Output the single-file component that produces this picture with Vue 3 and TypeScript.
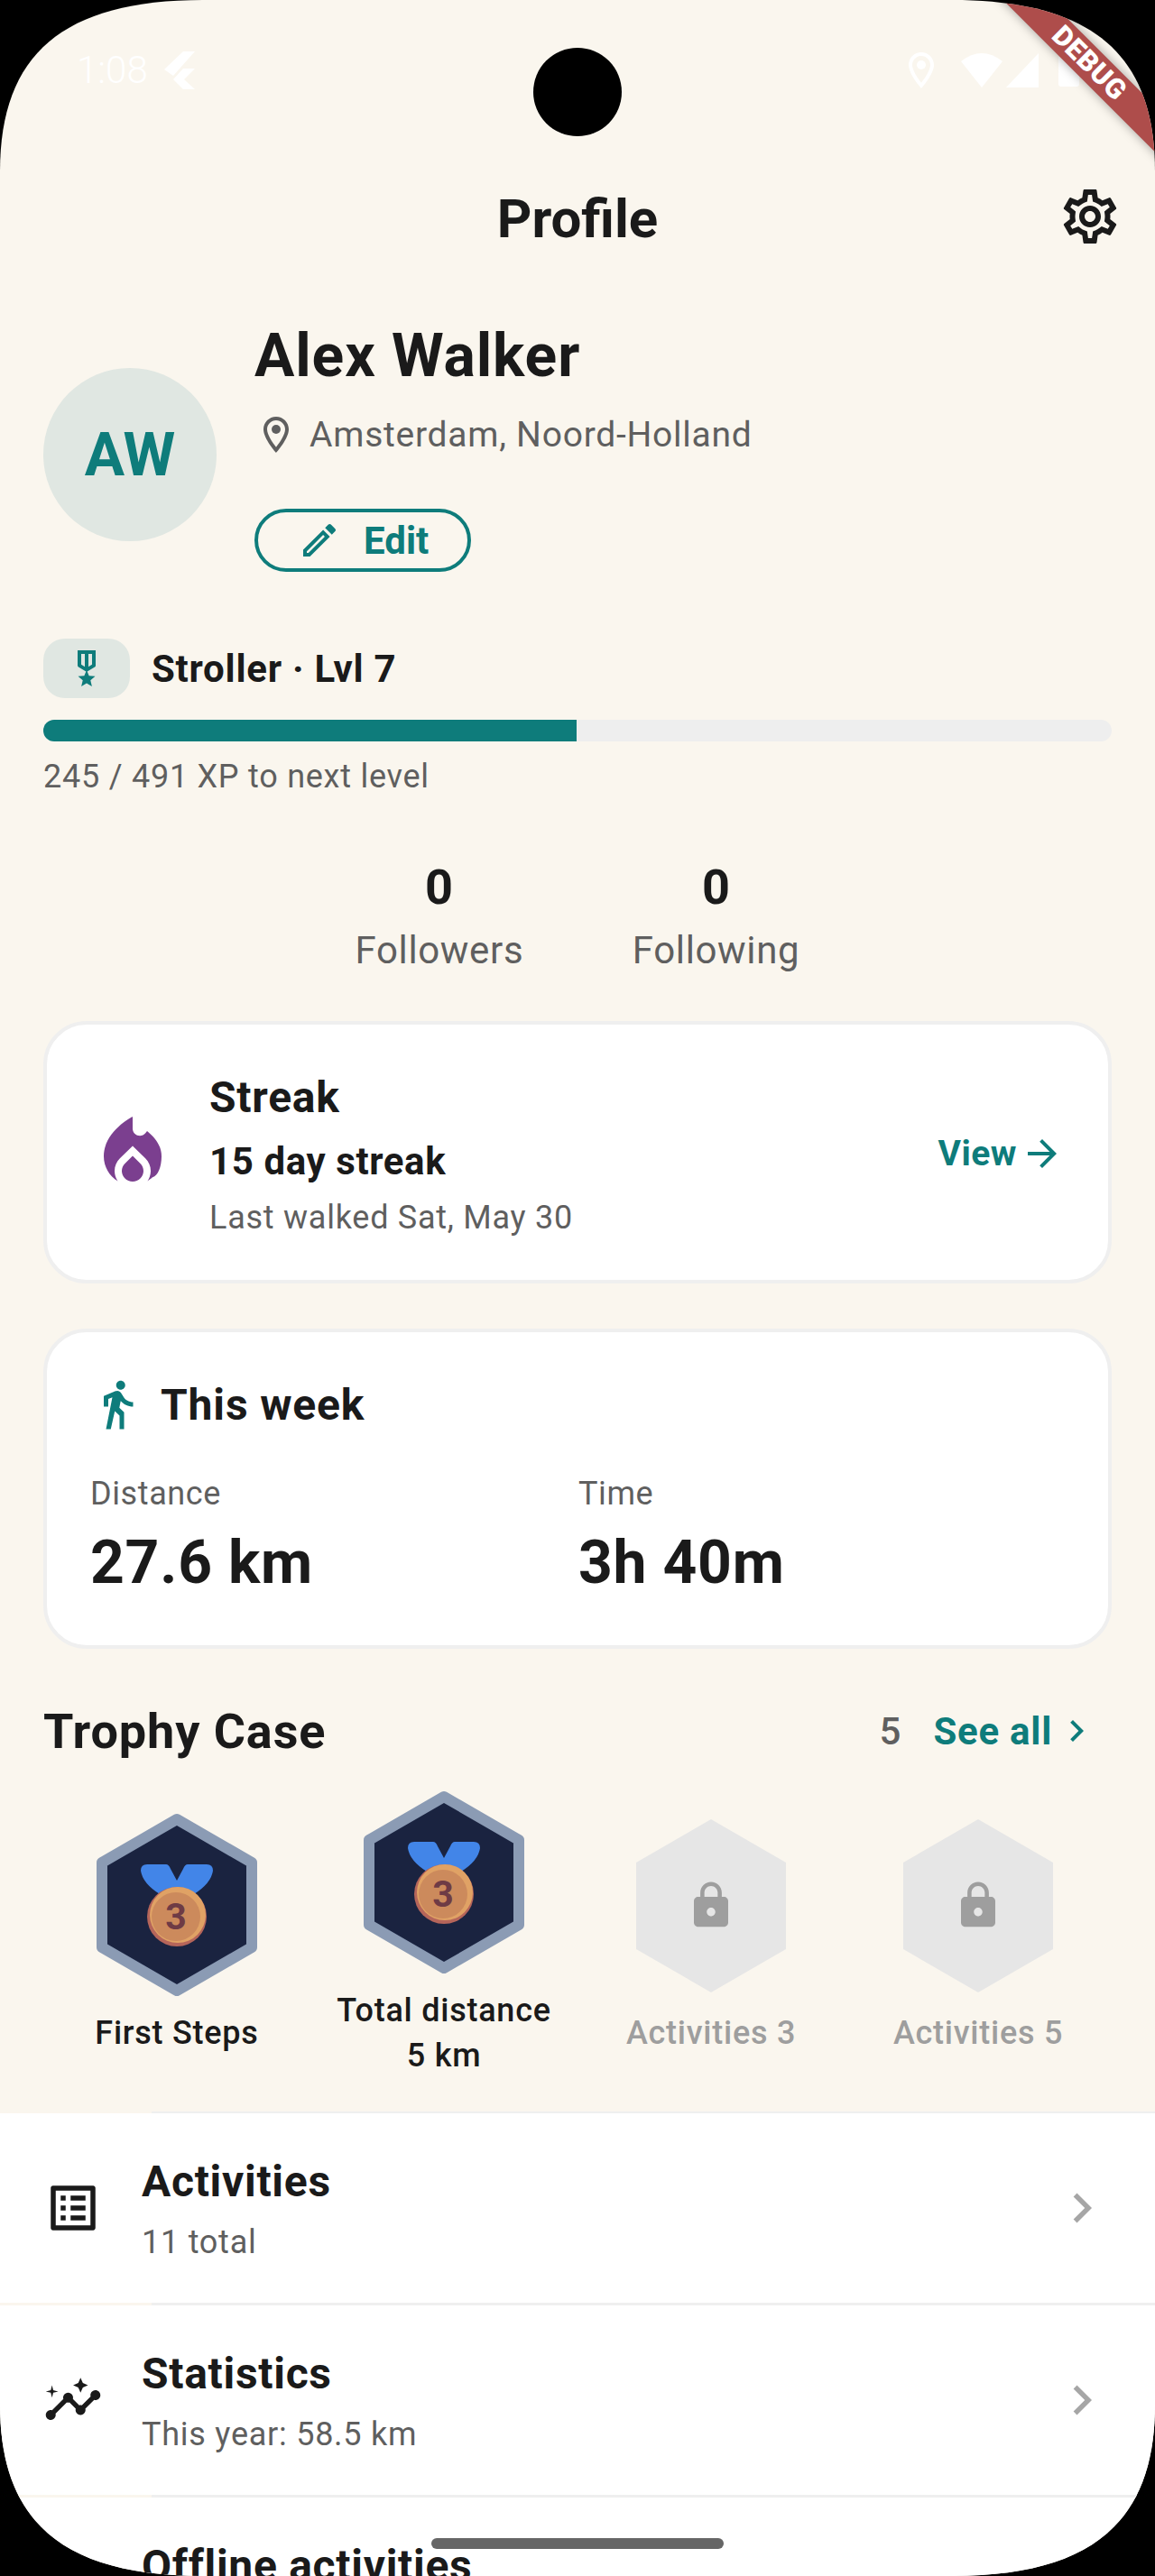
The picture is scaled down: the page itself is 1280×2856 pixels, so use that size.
<script setup lang="ts">
const stats = [
  { value: '0', label: 'Followers' },
  { value: '0', label: 'Following' },
]
const week = [
  { label: 'Distance', value: '27.6 km' },
  { label: 'Time', value: '3h 40m' },
]
const trophies = [
  { lines: ['First Steps'], earned: true },
  { lines: ['Total distance', '5 km'], earned: true },
  { lines: ['Activities 3'], earned: false },
  { lines: ['Activities 5'], earned: false },
]
const chevron = 'M10 6L8.59 7.41 13.17 12l-4.58 4.59L10 18l6-6z'
const rows = [
  {
    title: 'Activities',
    sub: '11 total',
    icon: 'M19 5v14H5V5h14m1.1-2H3.9c-.5 0-.9.4-.9.9v16.2c0 .4.4.9.9.9h16.2c.4 0 .9-.5.9-.9V3.9c0-.5-.5-.9-.9-.9zM11 7h6v2h-6V7zm0 4h6v2h-6v-2zm0 4h6v2h-6zM7 7h2v2H7zm0 4h2v2H7zm0 4h2v2H7z',
  },
  {
    title: 'Statistics',
    sub: 'This year: 58.5 km',
    icon: 'M21 8c-1.45 0-2.26 1.44-1.93 2.51l-3.55 3.56c-.3-.09-.74-.09-1.04 0l-2.55-2.55C12.27 10.45 11.46 9 10 9c-1.45 0-2.27 1.44-1.93 2.52l-4.56 4.55C2.44 15.74 1 16.55 1 18c0 1.1.9 2 2 2 1.45 0 2.26-1.44 1.93-2.51l4.55-4.56c.3.09.74.09 1.04 0l2.55 2.55C12.73 16.55 13.54 18 15 18c1.45 0 2.27-1.44 1.93-2.52l3.56-3.55c1.07.33 2.51-.48 2.51-1.93 0-1.1-.9-2-2-2zM15 9l.94-2.07L18 6l-2.06-.93L15 3l-.92 2.07L12 6l2.08.93zM3.5 11L4 9l2-.5L4 8l-.5-2L3 8l-2 .5L3 9z',
  },
  {
    title: 'Offline activities',
    sub: '',
    icon: '',
  },
]
</script>

<template>
  <div class="device">
    <div class="camera"></div>
    <div class="banner"><span>DEBUG</span></div>

    <div class="status">
      <div class="status-left">
        <span class="time">1:08</span>
        <svg class="flutter" width="34" height="42" viewBox="0 0 34 42">
          <polygon fill="#fff" points="21,0 34,0 10,27 0,20" />
          <polygon fill="#fff" points="21,19 34,19 22,31 34,42 21,42 10,31" />
        </svg>
      </div>
      <div class="status-right">
        <svg width="40" height="40" viewBox="5 2 14 20" class="s-pin">
          <path fill="#fff" d="M12 2C8.13 2 5 5.13 5 9c0 5.25 7 13 7 13s7-7.75 7-13c0-3.87-3.13-7-7-7zM7 9c0-2.76 2.24-5 5-5s5 2.24 5 5c0 2.88-2.88 7.19-5 9.88C9.92 16.21 7 11.85 7 9z" />
          <circle fill="#fff" cx="12" cy="9" r="2.5" />
        </svg>
        <svg class="s-wifi" width="46" height="38" viewBox="0 0 46 38">
          <path fill="#fff" d="M0 9 Q23 -9 46 9 L23 38 Z" />
        </svg>
        <svg class="s-cell" width="36" height="38" viewBox="0 0 36 38">
          <polygon fill="#fff" points="0,38 36,0 36,38" />
        </svg>
        <svg class="s-batt" width="23" height="38" viewBox="0 0 23 38">
          <path fill="#fff" d="M7 0H16V4H21Q23 4 23 6V35Q23 38 20 38H3Q0 38 0 35V6Q0 4 2 4H7Z" />
        </svg>
      </div>
    </div>

    <header class="appbar">
      <h1 class="title">Profile</h1>
      <svg class="gear" width="72" height="72" viewBox="0 0 24 24">
        <path fill="#1a1a1a" d="M19.43 12.98c.04-.32.07-.64.07-.98 0-.34-.03-.66-.07-.98l2.11-1.65c.19-.15.24-.42.12-.64l-2-3.46c-.09-.16-.26-.25-.44-.25-.06 0-.12.01-.17.03l-2.49 1c-.52-.4-1.08-.73-1.69-.98l-.38-2.65C14.46 2.18 14.25 2 14 2h-4c-.25 0-.46.18-.49.42l-.38 2.65c-.61.25-1.17.59-1.69.98l-2.49-1c-.06-.02-.12-.03-.18-.03-.17 0-.34.09-.43.25l-2 3.46c-.13.22-.07.49.12.64l2.11 1.65c-.04.32-.07.65-.07.98 0 .33.03.66.07.98l-2.11 1.65c-.19.15-.24.42-.12.64l2 3.46c.09.16.26.25.44.25.06 0 .12-.01.17-.03l2.49-1c.52.4 1.08.73 1.69.98l.38 2.65c.03.24.24.42.49.42h4c.25 0 .46-.18.49-.42l.38-2.65c.61-.25 1.17-.59 1.69-.98l2.49 1c.06.02.12.03.18.03.17 0 .34-.09.43-.25l2-3.46c.12-.22.07-.49-.12-.64l-2.11-1.65zm-1.98-1.71c.04.31.05.52.05.73 0 .21-.02.43-.05.73l-.14 1.13.89.7 1.08.84-.7 1.21-1.27-.51-1.04-.42-.9.68c-.43.32-.84.56-1.25.73l-1.06.43-.16 1.13-.2 1.35h-1.4l-.19-1.35-.16-1.13-1.06-.43c-.43-.18-.83-.41-1.23-.71l-.91-.7-1.06.43-1.27.51-.7-1.21 1.08-.84.89-.7-.14-1.13c-.03-.31-.05-.54-.05-.74s.02-.43.05-.73l.14-1.13-.89-.7-1.08-.84.7-1.21 1.27.51 1.04.42.9-.68c.43-.32.84-.56 1.25-.73l1.06-.43.16-1.13.2-1.35h1.39l.19 1.35.16 1.13 1.06.43c.43.18.83.41 1.23.71l.91.7 1.06-.43 1.27-.51.7 1.21-1.07.85-.89.7.14 1.13zM12 8c-2.21 0-4 1.79-4 4s1.79 4 4 4 4-1.79 4-4-1.79-4-4-4zm0 6c-1.1 0-2-.9-2-2s.9-2 2-2 2 .9 2 2-.9 2-2 2z" />
      </svg>
    </header>

    <section class="profile">
      <div class="avatar">AW</div>
      <div class="identity">
        <div class="name">Alex Walker</div>
        <div class="location">
          <svg width="48" height="48" viewBox="0 0 24 24">
            <path fill="#5f5f5f" d="M12 2C8.13 2 5 5.13 5 9c0 5.25 7 13 7 13s7-7.75 7-13c0-3.87-3.13-7-7-7zM7 9c0-2.76 2.24-5 5-5s5 2.24 5 5c0 2.88-2.88 7.19-5 9.88C9.92 16.21 7 11.85 7 9z" />
            <circle fill="#5f5f5f" cx="12" cy="9" r="2.5" />
          </svg>
          <span>Amsterdam, Noord-Holland</span>
        </div>
        <div class="edit">
          <svg width="48" height="48" viewBox="0 0 24 24">
            <path fill="#0e7c7b" d="M14.06 9.02l.92.92L5.92 19H5v-.92l9.06-9.06M17.66 3c-.25 0-.51.1-.7.29l-1.83 1.83 3.75 3.75 1.83-1.83c.39-.39.39-1.02 0-1.41l-2.34-2.34c-.2-.2-.45-.29-.71-.29zm-3.6 3.19L3 17.25V21h3.75L17.81 9.94l-3.75-3.75z" />
          </svg>
          <span>Edit</span>
        </div>
      </div>
    </section>

    <section class="level">
      <div class="level-row">
        <div class="level-badge">
          <svg width="48" height="48" viewBox="0 0 24 24">
            <path fill="#0e7c7b" d="M17 10.43V2H7v8.43c0 .35.18.68.49.86l4.18 2.51-.99 2.34-3.41.29 2.59 2.24L9.07 22 12 20.23 14.93 22l-.78-3.33 2.59-2.24-3.41-.29-.99-2.34 4.18-2.51c.3-.17.48-.5.48-.85zm-6 .64l-2-1.2V4h2v7.07zm4-1.2l-2 1.2V4h2v5.87z" />
          </svg>
        </div>
        <span class="level-name">Stroller · Lvl 7</span>
      </div>
      <div class="track"><div class="fill" :style="{ width: (245 / 491) * 100 + '%' }"></div></div>
      <div class="xp">245 / 491 XP to next level</div>
    </section>

    <section class="stats">
      <div v-for="s in stats" :key="s.label" class="stat">
        <div class="stat-value">{{ s.value }}</div>
        <div class="stat-label">{{ s.label }}</div>
      </div>
    </section>

    <section class="card streak">
      <svg class="flame" width="96" height="96" viewBox="0 0 24 24">
        <path fill="#7b3f8f" d="M12 12.9l-2.13 2.09C9.31 15.55 9 16.28 9 17.06 9 18.68 10.35 20 12 20s3-1.32 3-2.94c0-.78-.31-1.52-.87-2.07L12 12.9zM16 6l-.44.55C14.38 8.02 12 7.19 12 5.3V2s-8 4-8 11c0 2.92 1.56 5.47 3.89 6.86C7.33 19.07 7 18.12 7 17.06c0-1.32.52-2.56 1.47-3.5L12 10.1l3.53 3.47c.95.93 1.47 2.17 1.47 3.5 0 1.05-.33 2-.89 2.78.4-.24 1.36-.98 1.4-1.03C19.04 18.39 20 15.88 20 13c0-3-1.8-5.2-4-7z" />
      </svg>
      <div class="streak-text">
        <div class="streak-title">Streak</div>
        <div class="streak-days">15 day streak</div>
        <div class="streak-last">Last walked Sat, May 30</div>
      </div>
      <div class="view">
        <span>View</span>
        <svg width="48" height="48" viewBox="0 0 24 24">
          <path fill="#0e7c7b" d="M12 4l-1.41 1.41L16.17 11H4v2h12.17l-5.58 5.59L12 20l8-8z" />
        </svg>
      </div>
    </section>

    <section class="card weekcard">
      <div class="week-head">
        <svg width="60" height="60" viewBox="0 0 24 24">
          <path fill="#0e7c7b" d="M13.5 5.5c1.1 0 2-.9 2-2s-.9-2-2-2-2 .9-2 2 .9 2 2 2zM9.8 8.9L7 23h2.1l1.8-8 2.1 2v6h2v-7.5l-2.1-2 .6-3C14.8 12 16.8 13 19 13v-2c-1.9 0-3.5-1-4.3-2.4l-1-1.6c-.4-.6-1-1-1.7-1-.3 0-.5.1-.8.1L6 8.3V13h2V9.6l1.8-.7" />
        </svg>
        <span>This week</span>
      </div>
      <div class="week-grid">
        <div v-for="w in week" :key="w.label">
          <div class="week-label">{{ w.label }}</div>
          <div class="week-value">{{ w.value }}</div>
        </div>
      </div>
    </section>

    <section class="trophy-head">
      <span class="trophy-title">Trophy Case</span>
      <div class="trophy-right">
        <span class="trophy-count">5</span>
        <span class="see-all">See all</span>
        <svg width="48" height="48" viewBox="0 0 24 24"><path fill="#0e7c7b" :d="chevron" /></svg>
      </div>
    </section>

    <section class="trophies">
      <div v-for="t in trophies" :key="t.lines[0]" class="trophy">
        <svg class="hex" width="178" height="204" viewBox="0 0 178 204">
          <template v-if="t.earned">
            <polygon points="89,7 172,55 172,149 89,197 6,149 6,55" fill="#1a2340" stroke="#8b9bb4" stroke-width="12" stroke-linejoin="round" />
            <path fill="#4285e8" d="M56 57H77Q80 57 82 62L89 75L96 62Q98 57 101 57H122Q129 57 129 64Q127 78 108 90H70Q51 78 49 64Q49 57 56 57Z" />
            <circle cx="89" cy="115" r="33" fill="#b5655a" />
            <circle cx="90" cy="113" r="31" fill="#e0a265" />
            <circle cx="88" cy="115" r="27" fill="#cc8a5c" />
            <text x="88" y="129" text-anchor="middle" class="digit">3</text>
          </template>
          <template v-else>
            <polygon points="89,7 172,55 172,151 89,199 6,151 6,55" fill="#e6e6e6" />
            <g transform="translate(60.5 74) scale(2.375)">
              <path fill="#9e9e9e" d="M18 8h-1V6c0-2.76-2.24-5-5-5S7 3.24 7 6v2H6c-1.1 0-2 .9-2 2v10c0 1.1.9 2 2 2h12c1.1 0 2-.9 2-2V10c0-1.1-.9-2-2-2zm-6 9c-1.1 0-2-.9-2-2s.9-2 2-2 2 .9 2 2-.9 2-2 2zm3.1-9H8.9V6c0-1.71 1.39-3.1 3.1-3.1 1.71 0 3.1 1.39 3.1 3.1v2z" />
            </g>
          </template>
        </svg>
        <div class="trophy-label" :class="{ locked: !t.earned }">
          <div v-for="l in t.lines" :key="l">{{ l }}</div>
        </div>
      </div>
    </section>

    <section class="list">
      <div class="divider top"></div>
      <template v-for="r in rows" :key="r.title">
        <div class="row">
          <svg v-if="r.icon" class="row-icon" width="66" height="66" viewBox="0 0 24 24"><path fill="#1a1a1a" :d="r.icon" /></svg>
          <div v-else class="row-icon blank"></div>
          <div class="row-text">
            <div class="row-title">{{ r.title }}</div>
            <div class="row-sub">{{ r.sub || '\u00a0' }}</div>
          </div>
          <svg v-if="r.icon" class="row-chev" width="66" height="66" viewBox="0 0 24 24"><path fill="#a6a6a6" :d="chevron" /></svg>
        </div>
        <div class="divider"></div>
      </template>
    </section>

    <div class="home"></div>
  </div>
</template>

<style scoped>
.device {
  position: relative;
  width: 1280px;
  height: 2856px;
  overflow: hidden;
  background: #faf6ee;
  clip-path: path("M0 190C0 60 70 0 225 0H1055C1210 0 1280 60 1280 190V2666C1280 2796 1210 2856 1055 2856H225C70 2856 0 2796 0 2666Z");
  font-family: Roboto, "Liberation Sans", sans-serif;
  color: #1a1a1a;
}
.camera {
  position: absolute;
  left: 591px;
  top: 53px;
  width: 98px;
  height: 98px;
  border-radius: 50%;
  background: #000;
}
.banner {
  position: absolute;
  left: 1000px;
  top: 45px;
  width: 400px;
  height: 36px;
  box-sizing: border-box;
  padding-left: 20px;
  transform: rotate(45deg);
  background: #ae4d4b;
  box-shadow: 0 0 12px rgba(0, 0, 0, 0.35);
  display: flex;
  align-items: center;
  justify-content: center;
  z-index: 5;
}
.banner span {
  color: #fff;
  font-weight: 900;
  font-size: 31px;
  line-height: 36px;
  letter-spacing: 0.5px;
}
.status {
  height: 168px;
  display: flex;
  justify-content: space-between;
  align-items: flex-start;
  box-sizing: border-box;
  padding: 57px 84px 0 85px;
  color: #fff;
}
.status-left {
  display: flex;
  align-items: center;
  height: 42px;
}
.time {
  font-size: 42px;
  line-height: 42px;
  font-weight: 300;
  width: 97px;
}
.status-right {
  display: flex;
  align-items: flex-start;
}
.s-pin { margin-top: 1px; margin-right: 24px; }
.s-wifi { margin-top: 2px; margin-right: 4px; }
.s-cell { margin-top: 2px; margin-right: 22px; }
.s-batt { margin-top: 1px; }

.appbar {
  height: 144px;
  box-sizing: border-box;
  padding-top: 6px;
  position: relative;
  display: flex;
  align-items: center;
  justify-content: center;
}
.title {
  margin: 0;
  font-size: 60px;
  line-height: 80px;
  font-weight: 700;
}
.gear {
  position: absolute;
  right: 36px;
  top: 36px;
}
.profile {
  margin-top: 41px;
  padding: 0 48px;
  display: flex;
  align-items: center;
  gap: 42px;
}
.avatar {
  width: 192px;
  height: 192px;
  margin-top: 2px;
  border-radius: 50%;
  background: #e0e7e2;
  color: #0e7c7b;
  font-size: 66px;
  font-weight: 700;
  display: flex;
  align-items: center;
  justify-content: center;
  flex: none;
}
.identity {
  height: 300px;
  box-sizing: border-box;
  padding-top: 2px;
  display: flex;
  flex-direction: column;
  align-items: flex-start;
}
.name {
  font-size: 66px;
  line-height: 80px;
  font-weight: 700;
  letter-spacing: 0.9px;
}
.location {
  margin-top: 23px;
  height: 48px;
  display: flex;
  align-items: center;
  color: #5f5f5f;
  font-size: 39px;
  letter-spacing: 0.75px;
  gap: 13px;
}
.edit {
  margin-top: 58px;
  width: 240px;
  height: 70px;
  box-sizing: border-box;
  border: 4px solid #0e7c7b;
  border-radius: 35px;
  display: flex;
  align-items: center;
  padding-left: 44px;
  gap: 25px;
  color: #0e7c7b;
  font-size: 42px;
  font-weight: 700;
}
.level {
  margin-top: 55px;
  padding: 0 48px;
}
.level-row {
  display: flex;
  align-items: center;
  gap: 24px;
}
.level-badge {
  width: 96px;
  height: 66px;
  border-radius: 24px;
  background: #e0e7e2;
  display: flex;
  align-items: center;
  justify-content: center;
}
.level-name {
  font-size: 42px;
  font-weight: 700;
  letter-spacing: 0.75px;
}
.track {
  margin-top: 24px;
  height: 24px;
  border-radius: 12px;
  background: #eeeeee;
  overflow: hidden;
}
.fill {
  height: 100%;
  background: #0e7c7b;
}
.xp {
  margin-top: 15px;
  font-size: 36px;
  line-height: 48px;
  color: #5f5f5f;
  letter-spacing: 0.75px;
}
.stats {
  margin-top: 69px;
  display: flex;
  justify-content: center;
  gap: 121px;
}
.stat {
  width: 186px;
  text-align: center;
}
.stat-value {
  font-size: 54px;
  line-height: 60px;
  font-weight: 700;
}
.stat-label {
  margin-top: 10px;
  font-size: 42px;
  line-height: 60px;
  color: #5f5f5f;
  white-space: nowrap;
  letter-spacing: 0.65px;
}
.card {
  margin: 0 48px;
  box-sizing: border-box;
  background: #fff;
  border: 4px solid #efefef;
  border-radius: 48px;
}
.streak {
  margin-top: 48px;
  height: 291px;
  display: flex;
  align-items: center;
  padding: 0 49px 0 47px;
}
.flame { flex: none; }
.streak-text {
  margin-left: 37px;
  padding-top: 4px;
  flex: 1;
}
.streak-title {
  font-size: 48px;
  line-height: 64px;
  font-weight: 700;
  letter-spacing: 0.75px;
}
.streak-days {
  margin-top: 9px;
  font-size: 42px;
  line-height: 60px;
  font-weight: 700;
  letter-spacing: 0.6px;
}
.streak-last {
  margin-top: 7px;
  font-size: 36px;
  line-height: 50px;
  color: #5f5f5f;
  letter-spacing: 0.75px;
}
.view {
  display: flex;
  align-items: center;
  gap: 4px;
  padding-top: 2px;
  color: #0e7c7b;
  font-size: 39px;
  font-weight: 700;
  letter-spacing: 0.5px;
}
.weekcard {
  margin-top: 50px;
  height: 355px;
  padding: 48px 46px 0;
}
.week-head {
  display: flex;
  align-items: center;
  margin-left: 2px;
  gap: 18px;
  height: 64px;
  font-size: 48px;
  font-weight: 700;
  letter-spacing: 0.85px;
}
.week-grid {
  margin-top: 42px;
  margin-left: 2px;
  display: grid;
  grid-template-columns: 1fr 1fr;
  width: 1082px;
}
.week-label {
  font-size: 36px;
  line-height: 50px;
  color: #5f5f5f;
  letter-spacing: 0.6px;
}
.week-value {
  margin-top: 12px;
  font-size: 66px;
  line-height: 80px;
  font-weight: 700;
  letter-spacing: 0.75px;
}
.trophy-head {
  margin-top: 55px;
  height: 72px;
  padding: 0 48px;
  display: flex;
  align-items: center;
  justify-content: space-between;
}
.trophy-title {
  font-size: 54px;
  font-weight: 700;
  letter-spacing: 0.9px;
}
.trophy-right {
  display: flex;
  align-items: center;
  margin-right: 15px;
}
.trophy-count {
  font-size: 42px;
  font-weight: 500;
  color: #5f5f5f;
  margin-right: 36px;
}
.see-all {
  font-size: 42px;
  font-weight: 700;
  color: #0e7c7b;
  margin-right: 3px;
  letter-spacing: 0.75px;
}
.trophies {
  margin-top: 30px;
  padding: 0 48px;
  height: 314px;
  display: grid;
  grid-template-columns: repeat(4, 1fr);
  align-items: center;
}
.trophy {
  display: flex;
  flex-direction: column;
  align-items: center;
}
.hex { display: block; }
.digit {
  font-family: Roboto, "Liberation Sans", sans-serif;
  font-size: 41px;
  font-weight: 700;
  fill: #6e3b45;
}
.trophy-label {
  margin-top: 15px;
  text-align: center;
  font-size: 36px;
  line-height: 50px;
  font-weight: 500;
  letter-spacing: 0.75px;
}
.trophy-label.locked { color: #9e9e9e; }
.list {
  margin-top: 42px;
  background: #fff;
}
.divider {
  height: 3px;
  background: linear-gradient(90deg, #faf6ee 168px, #efefef 168px);
}
.divider.top { height: 2px; }
.row {
  height: 210px;
  padding: 0 48px;
  display: flex;
  align-items: center;
  box-sizing: border-box;
}
.row-icon { flex: none; }
.row-icon.blank { width: 66px; height: 66px; }
.row-text {
  margin-left: 43px;
  padding-top: 6px;
  flex: 1;
}
.row-title {
  font-size: 48px;
  line-height: 64px;
  font-weight: 700;
  letter-spacing: 0.7px;
}
.row-sub {
  margin-top: 6px;
  font-size: 36px;
  line-height: 58px;
  color: #5f5f5f;
  letter-spacing: 0.75px;
}
.row-chev { flex: none; }
.home {
  position: absolute;
  left: 478px;
  top: 2814px;
  width: 324px;
  height: 12px;
  border-radius: 6px;
  background: #666;
}
</style>

<style>
html, body { background: #000; margin: 0; }
</style>
